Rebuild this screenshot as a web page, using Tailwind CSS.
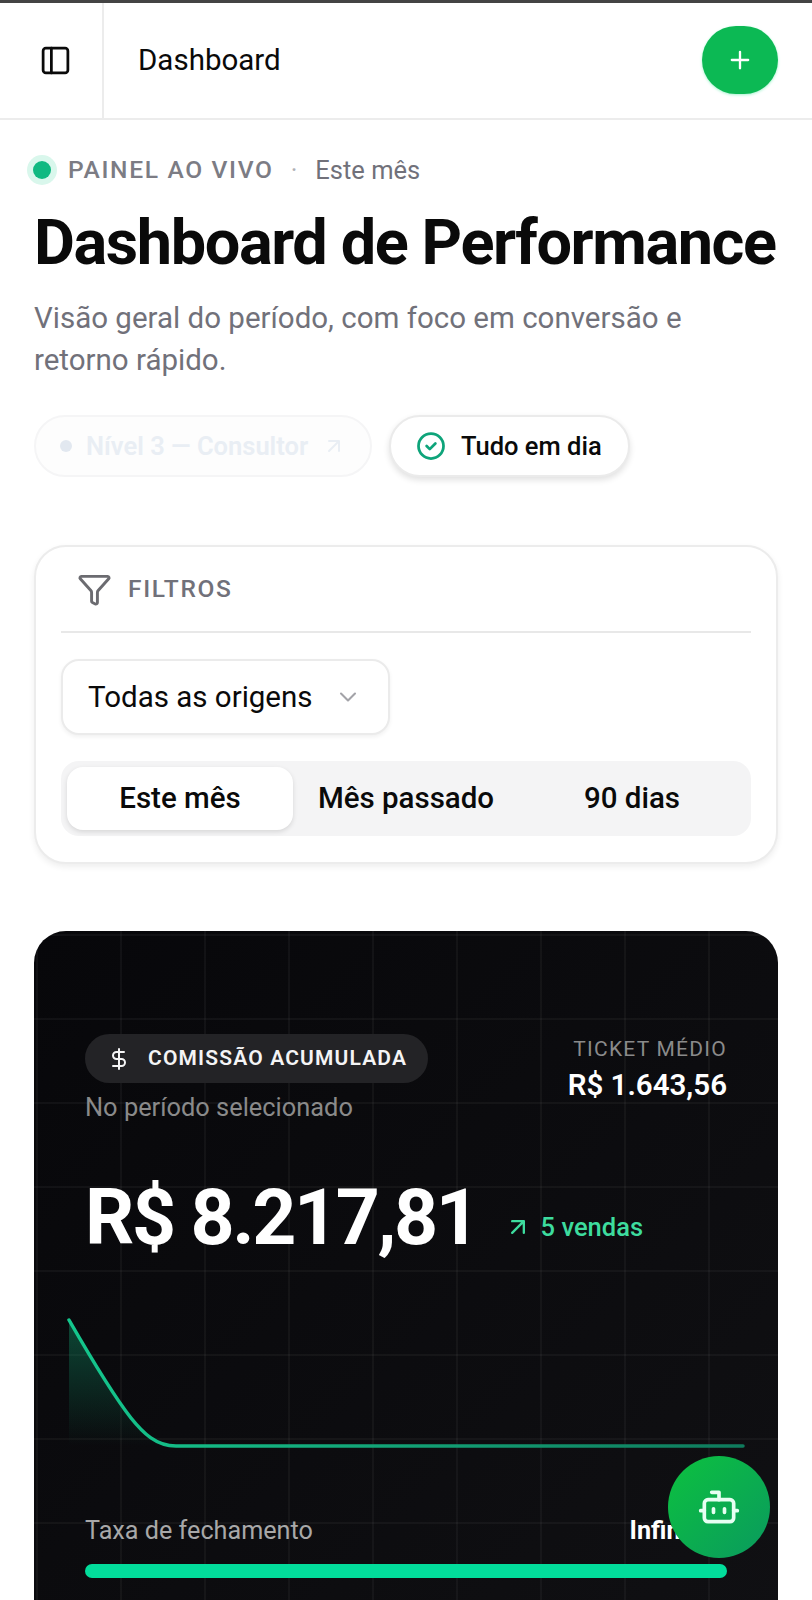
<!DOCTYPE html>
<html lang="pt-BR">
<head>
  <meta charset="UTF-8" />
  <meta name="viewport" content="width=device-width, initial-scale=1.0"/>
  <title>Dashboard de Performance</title>
  <script src="https://cdn.jsdelivr.net/npm/@tailwindcss/browser@4"></script>
</head>
<body class="bg-white font-['Roboto',sans-serif] text-[#0a0a0a]">
<div class="relative h-[1600px] w-[812px] overflow-hidden bg-white">

  <!-- Top edge -->
  <div class="h-[3px] bg-[#444444]"></div>

  <!-- Header -->
  <header class="flex h-[117px] items-center border-b-2 border-[#ececec]">
    <div class="flex h-full w-[104px] items-center justify-center border-r-2 border-[#ececec] pl-[8px]">
      <svg class="h-[33px] w-[33px]" fill="none" stroke="currentColor" stroke-width="2" viewBox="0 0 24 24" stroke-linecap="round" stroke-linejoin="round">
        <rect x="3" y="3" width="18" height="18" rx="2"/><path d="M9 3v18"/>
      </svg>
    </div>
    <span class="ml-[34px] text-[29.5px]">Dashboard</span>
    <button class="mb-[2px] ml-auto mr-[34px] flex h-[68px] w-[76px] items-center justify-center rounded-full bg-[#0cb954] text-white shadow-[0_1px_3px_#a7f3d0]">
      <svg class="h-7 w-7" fill="none" stroke="currentColor" stroke-width="2" viewBox="0 0 24 24" stroke-linecap="round"><path d="M5 12h14M12 5v14"/></svg>
    </button>
  </header>

  <main class="px-[34px]">
    <!-- Title block -->
    <div class="mt-[33px] flex h-[34px] items-center text-[25.5px] text-[#71717a]">
      <span class="h-[18px] w-[18px] -translate-x-[1px] rounded-full bg-[#10b981] ring-[6px] ring-[#d9f7ec]"></span>
      <span class="ml-[16px] text-[24.6px] font-medium tracking-[1.65px] text-[#7c7c84]">PAINEL AO VIVO</span>
      <span class="ml-[17px] text-[#b0b0b6]">·</span>
      <span class="ml-[18px]">Este mês</span>
    </div>
    <h1 class="mt-[21px] text-[63px] font-bold leading-[70px] tracking-[-1.4px] whitespace-nowrap">Dashboard de Performance</h1>
    <p class="mt-[19px] text-[29.5px] leading-[42px] text-[#71717a]">Visão geral do período, com foco em conversão e<br>retorno rápido.</p>

    <!-- Status pills -->
    <div class="mt-[34px] flex gap-[17px]">
      <div class="flex h-[62px] w-[338px] items-center rounded-full border-2 border-[#f5f5f6] bg-[#fdfdfd] pl-[24px] text-[25.5px] font-semibold text-[#e9eef4]">
        <span class="h-[12px] w-[12px] rounded-full bg-[#e2e8f0]"></span>
        <span class="ml-[14px]">Nível 3 — Consultor</span>
        <svg class="ml-[14px] h-[24px] w-[24px]" fill="none" stroke="currentColor" stroke-width="2" viewBox="0 0 24 24" stroke-linecap="round" stroke-linejoin="round"><path d="M7 17 17 7M7 7h10v10"/></svg>
      </div>
      <div class="flex h-[62px] w-[241px] items-center rounded-full border-2 border-[#ebebeb] bg-white pl-[25px] text-[25.5px] font-medium shadow-[0_3px_6px_rgba(0,0,0,0.12)]">
        <svg class="h-[30px] w-[30px] text-[#0ea47a]" fill="none" stroke="currentColor" stroke-width="2.2" viewBox="0 0 24 24" stroke-linecap="round" stroke-linejoin="round"><circle cx="12" cy="12" r="10"/><path d="m8.5 12 2.5 2.5 4.5-4.5"/></svg>
        <span class="ml-[15px]">Tudo em dia</span>
      </div>
    </div>

    <!-- Filters -->
    <section class="mt-[68px] h-[319px] rounded-[32px] border-2 border-[#ececec] bg-white px-[25px] shadow-[0_3px_6px_rgba(0,0,0,0.07)]">
      <div class="flex h-[86px] items-center border-b-2 border-[#e8e8e8] pl-[16px]">
        <svg class="h-[35px] w-[35px] text-[#6b6b70]" fill="none" stroke="currentColor" stroke-width="2" viewBox="0 0 24 24" stroke-linecap="round" stroke-linejoin="round"><path d="M10 20a1 1 0 0 0 .55.9l2 1A1 1 0 0 0 14 21v-7a2 2 0 0 1 .52-1.34L21.74 4.67A1 1 0 0 0 21 3H3a1 1 0 0 0-.74 1.67l7.22 7.99A2 2 0 0 1 10 14z"/></svg>
        <span class="ml-[16px] text-[24.5px] font-medium tracking-[1.7px] text-[#71717a]">FILTROS</span>
      </div>
      <div class="mt-[26px] flex h-[76px] w-[329px] items-center rounded-[18px] border-2 border-[#ebebeb] bg-white pl-[25px] text-[29.5px] shadow-[0_2px_4px_rgba(0,0,0,0.06)]">
        <span>Todas as origens</span>
        <svg class="ml-[21px] h-[28px] w-[28px] text-[#a3a3a8]" fill="none" stroke="currentColor" stroke-width="1.8" viewBox="0 0 24 24" stroke-linecap="round" stroke-linejoin="round"><path d="m6 9 6 6 6-6"/></svg>
      </div>
      <div class="mt-[26px] grid h-[75px] grid-cols-3 rounded-[18px] bg-[#f4f4f5] p-[6px] text-center text-[29.5px] font-medium">
        <div class="flex items-center justify-center rounded-[16px] bg-white shadow-[0_2px_5px_rgba(0,0,0,0.12)]">Este mês</div>
        <div class="flex items-center justify-center">Mês passado</div>
        <div class="flex items-center justify-center">90 dias</div>
      </div>
    </section>

    <!-- Commission card -->
    <section class="mt-[67px] h-[700px] rounded-[32px] bg-[#0a0a0c] bg-[linear-gradient(rgba(255,255,255,0.04)_2px,transparent_2px),linear-gradient(90deg,rgba(255,255,255,0.04)_2px,transparent_2px),linear-gradient(135deg,#07070a,#101013)] bg-[size:84px_84px,84px_84px,100%_100%] bg-[position:2px_3px,2px_3px,0_0] px-[51px]">
      <div class="flex justify-between pt-[103px]">
        <div>
          <div class="flex h-[49px] w-[343px] items-center rounded-full bg-[#232326] pl-[22px] text-[21px] font-semibold tracking-[1.15px] text-[#f4f4f5]">
            <svg class="h-[24px] w-[24px]" fill="none" stroke="currentColor" stroke-width="2" viewBox="0 0 24 24" stroke-linecap="round" stroke-linejoin="round"><path d="M12 2v20M17 5H9.5a3.5 3.5 0 0 0 0 7h5a3.5 3.5 0 0 1 0 7H6"/></svg>
            <span class="ml-[17px]">COMISSÃO ACUMULADA</span>
          </div>
          <p class="mt-[8px] text-[25.4px] leading-[32px] text-[#8a8a8a]">No período selecionado</p>
        </div>
        <div class="text-right">
          <p class="mt-[1px] text-[21px] leading-[28px] tracking-[1.25px] text-[#8a8a8a]">TICKET MÉDIO</p>
          <p class="mt-[3px] text-[29.5px] font-semibold leading-[38px] text-white">R$ 1.643,56</p>
        </div>
      </div>

      <div class="mt-[50px] flex items-end">
        <span class="text-[77px] font-bold leading-[90px] tracking-[-2.4px] text-white">R$ 8.217,81</span>
        <span class="mb-[17px] ml-[26px] flex items-center text-[25.5px] font-medium text-[#3ddc9e]">
          <svg class="h-[28px] w-[28px]" fill="none" stroke="currentColor" stroke-width="2" viewBox="0 0 24 24" stroke-linecap="round" stroke-linejoin="round"><path d="M7 17 17 7M7 7h10v10"/></svg>
          <span class="ml-[9px]">5 vendas</span>
        </span>
      </div>

      <!-- Chart -->
      <svg class="ml-[-17px] mt-[52px] block h-[140px] w-[680px] overflow-visible" viewBox="0 0 680 140" fill="none">
        <defs>
          <linearGradient id="area" x1="0" y1="0" x2="0" y2="1">
            <stop offset="0" stop-color="#10b981" stop-opacity="0.35"/>
            <stop offset="1" stop-color="#10b981" stop-opacity="0"/>
          </linearGradient>
          <linearGradient id="line" gradientUnits="userSpaceOnUse" x1="0" y1="0" x2="680" y2="0">
            <stop offset="0" stop-color="#14c78d"/>
            <stop offset="0.2" stop-color="#14b884"/>
            <stop offset="1" stop-color="#0f7a5c"/>
          </linearGradient>
        </defs>
        <path d="M1 5C20 38 45 80 63 103C75 118 88 131 108 131L1 131Z" fill="url(#area)"/>
        <path d="M1 5C20 38 45 80 63 103C75 118 88 131 108 131L675 131" stroke="url(#line)" stroke-width="3.5" stroke-linecap="round"/>
      </svg>

      <div class="mt-[60px] flex items-center justify-between text-[25.2px] leading-[32px]">
        <span class="text-[#a8a8a8]">Taxa de fechamento</span>
        <span class="font-bold text-white">Infinity%</span>
      </div>
      <div class="mt-[17px] h-[14px] rounded-full bg-[#02dd9b]"></div>
    </section>
  </main>

  <!-- Assistant button -->
  <button class="absolute left-[668px] top-[1456px] flex h-[102px] w-[102px] items-center justify-center rounded-full bg-[linear-gradient(135deg,#0cc13f,#0a9a5e)] text-[#e6fff2]">
    <svg class="h-[44px] w-[44px]" fill="none" stroke="currentColor" stroke-width="2" viewBox="0 0 24 24" stroke-linecap="round" stroke-linejoin="round">
      <path d="M12 8V4H8"/><rect x="4" y="8" width="16" height="12" rx="2"/><path d="M2 14h2M20 14h2M15 13v2M9 13v2"/>
    </svg>
  </button>
</div>
</body>
</html>
